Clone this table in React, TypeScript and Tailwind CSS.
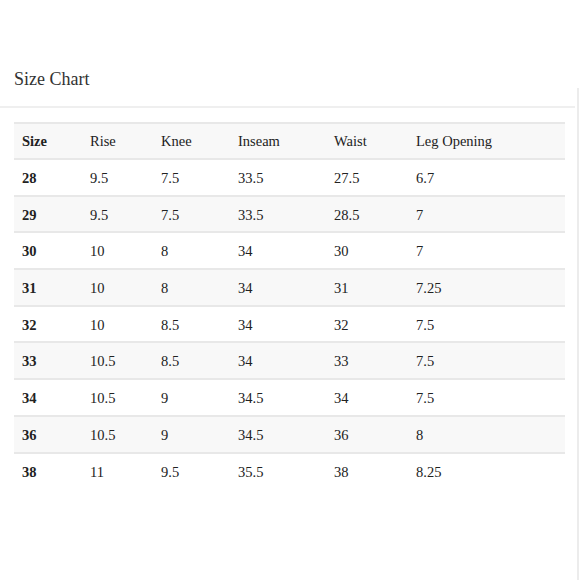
const HEAD = ['Size', 'Rise', 'Knee', 'Inseam', 'Waist', 'Leg Opening'];

const ROWS = [
  ['28', '9.5', '7.5', '33.5', '27.5', '6.7'],
  ['29', '9.5', '7.5', '33.5', '28.5', '7'],
  ['30', '10', '8', '34', '30', '7'],
  ['31', '10', '8', '34', '31', '7.25'],
  ['32', '10', '8.5', '34', '32', '7.5'],
  ['33', '10.5', '8.5', '34', '33', '7.5'],
  ['34', '10.5', '9', '34.5', '34', '7.5'],
  ['36', '10.5', '9', '34.5', '36', '8'],
  ['38', '11', '9.5', '35.5', '38', '8.25'],
];

// column widths, measured from the reference
const COLS = ['w-[76px]', 'w-[71px]', 'w-[77px]', 'w-[96px]', 'w-[82px]', 'flex-1'];

export default function App() {
  return (
    <div className="w-[580px] h-[580px] bg-white relative font-['Liberation_Serif',serif] text-[#222]">
      {/* right edge of the panel */}
      <div className="absolute right-[1px] top-[88px] bottom-0 w-[2px] bg-[#ececec]" />

      <div className="pt-[67px]">
        {/* Title */}
        <div className="pl-[14px] h-[41px] border-b-2 border-[#efefef] mr-[5px]">
          <h2 className="text-[18px] leading-[24px] text-[#333]">Size Chart</h2>
        </div>

        {/* Table */}
        <div className="mx-[14px] mr-[15px] mt-[14px] text-[14.5px]">
          <div className="flex items-center pt-[2px] h-[38px] bg-[#f8f8f8] border-t-2 border-b-2 border-[#e8e8e8]">
            {HEAD.map((h, i) => (
              <div key={h} className={`${COLS[i]} ${i === 0 ? 'pl-[8px] font-bold' : ''}`}>
                {h}
              </div>
            ))}
          </div>
          {ROWS.map((r, ri) => (
            <div
              key={r[0]}
              className={`flex items-center pt-[3px] h-[36.7px] ${ri % 2 === 1 ? 'bg-[#f8f8f8]' : 'bg-white'} ${
                ri < ROWS.length - 1 ? 'border-b-2 border-[#e8e8e8]' : ''
              }`}
            >
              {r.map((c, i) => (
                <div key={i} className={`${COLS[i]} ${i === 0 ? 'pl-[8px] font-bold' : ''}`}>
                  {c}
                </div>
              ))}
            </div>
          ))}
        </div>
      </div>
    </div>
  );
}
